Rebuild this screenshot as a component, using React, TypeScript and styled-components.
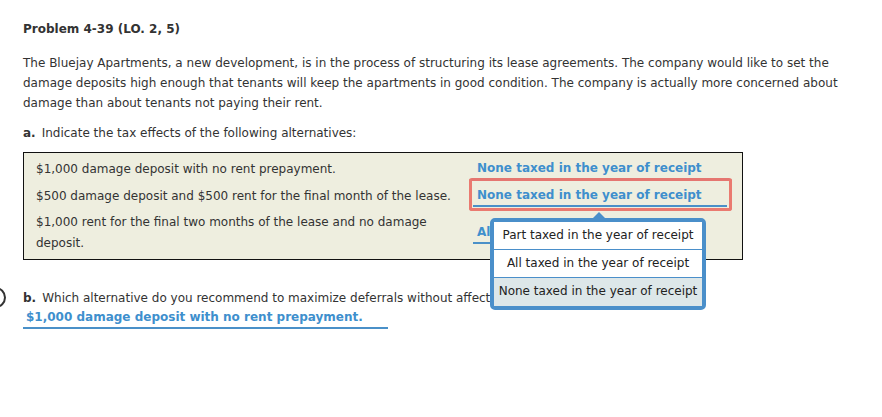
import React from "react";
import styled, { createGlobalStyle } from "styled-components";

const Global = createGlobalStyle`
  html, body { margin: 0; padding: 0; background: #fff; }
  body { font-family: "DejaVu Sans", Verdana, sans-serif; font-size: 12px; color: #333; }
`;

const Page = styled.div`
  position: relative;
  width: 882px;
  height: 417px;
  padding: 21px 23px 0 23px;
  box-sizing: border-box;
  overflow: hidden;
`;

const Title = styled.div`
  font-weight: bold;
  font-size: 12px;
  line-height: 16px;
  color: #333;
`;

const Paragraph = styled.p`
  margin: 16px 0 0 0;
  line-height: 20px;
  width: 820px;
`;

const Part = styled.div<{ $top: number }>`
  margin-top: ${(p) => p.$top}px;
  line-height: 20px;
  white-space: nowrap;
`;

const Label = styled.b`
  font-weight: bold;
  margin-right: 6px;
`;

const Table = styled.div`
  margin-top: 9px;
  width: 720px;
  box-sizing: border-box;
  border: 1px solid #111;
  background: #eeeedf;
  padding: 5px 0 5px 12px;
  display: flex;
  flex-direction: column;
  gap: 5px;
`;

const Row = styled.div`
  display: grid;
  grid-template-columns: 437px 269px;
  align-items: center;
`;

const Cell = styled.div`
  padding-right: 10px;
  line-height: 21px;
`;

const SelectWrap = styled.div<{ $focus?: boolean }>`
  position: relative;
  justify-self: start;
  &::before {
    content: "";
    display: ${(p) => (p.$focus ? "block" : "none")};
    position: absolute;
    left: -4px;
    right: -5px;
    top: -7px;
    bottom: -4px;
    border: 3px solid #ea7a70;
    border-top-color: #e57670;
    border-radius: 3px;
    pointer-events: none;
  }
`;

const SelectValue = styled.div<{ $short?: boolean }>`
  color: #3e8fcd;
  font-weight: bold;
  line-height: 20px;
  padding: 0 ${(p) => (p.$short ? 22 : 25)}px 0 4px;
  border-bottom: 2px solid #4a90c8;
  white-space: nowrap;
`;

const Menu = styled.div`
  position: absolute;
  left: 17px;
  top: 33px;
  width: 216px;
  box-sizing: border-box;
  border: 4px solid #4a8fca;
  border-radius: 5px;
  background: #fff;
  z-index: 5;
`;

const Arrow = styled.div`
  position: absolute;
  top: -10px;
  left: 99px;
  width: 0;
  height: 0;
  border-left: 6px solid transparent;
  border-right: 6px solid transparent;
  border-bottom: 6px solid #4a8fca;
`;

const Option = styled.div<{ $selected?: boolean; $last?: boolean }>`
  height: 28px;
  line-height: 26px;
  text-align: center;
  color: #222;
  font-size: 12px;
  white-space: nowrap;
  box-sizing: border-box;
  background: ${(p) => (p.$selected ? "#dde7e9" : "#fff")};
  border-bottom: ${(p) => (p.$last ? "0" : "1px solid #4a8fca")};
  ${(p) => (p.$last ? "line-height: 27px;" : "")}
`;

const Answer = styled.div`
  margin-top: -1px;
  width: 365px;
  color: #3e8fcd;
  font-weight: bold;
  line-height: 20px;
  padding-left: 3px;
  box-sizing: border-box;
  border-bottom: 2px solid #4a90c8;
`;

const EdgeCircle = styled.div`
  position: absolute;
  left: -15px;
  top: 287px;
  width: 17px;
  height: 17px;
  border: 2px solid #333;
  border-radius: 50%;
`;

const rows = [
  { left: "$1,000 damage deposit with no rent prepayment.", value: "None taxed in the year of receipt" },
  { left: "$500 damage deposit and $500 rent for the final month of the lease.", value: "None taxed in the year of receipt", focus: true },
  { left: "$1,000 rent for the final two months of the lease and no damage deposit.", value: "All taxed in the year of receipt", short: true },
];

const options = [
  "Part taxed in the year of receipt",
  "All taxed in the year of receipt",
  "None taxed in the year of receipt",
];

export default function App() {
  return (
    <>
      <Global />
      <Page>
        <EdgeCircle />
        <Title>Problem 4-39 (LO. 2, 5)</Title>
        <Paragraph>
          The Bluejay Apartments, a new development, is in the process of structuring its lease agreements. The company
          would like to set the damage deposits high enough that tenants will keep the apartments in good condition. The
          company is actually more concerned about damage than about tenants not paying their rent.
        </Paragraph>
        <Part $top={10}>
          <Label>a.</Label>Indicate the tax effects of the following alternatives:
        </Part>
        <Table>
          {rows.map((r, i) => (
            <Row key={i}>
              <Cell>{r.left}</Cell>
              <SelectWrap $focus={r.focus}>
                <SelectValue $short={r.short}>{r.value}</SelectValue>
                {r.focus && (
                  <Menu>
                    <Arrow />
                    {options.map((o, j) => (
                      <Option key={o} $selected={j === 2} $last={j === 2}>
                        {o}
                      </Option>
                    ))}
                  </Menu>
                )}
              </SelectWrap>
            </Row>
          ))}
        </Table>
        <Part $top={28}>
          <Label>b.</Label>Which alternative do you recommend to maximize deferrals without affecting the tenants?
        </Part>
        <Answer>$1,000 damage deposit with no rent prepayment.</Answer>
      </Page>
    </>
  );
}
